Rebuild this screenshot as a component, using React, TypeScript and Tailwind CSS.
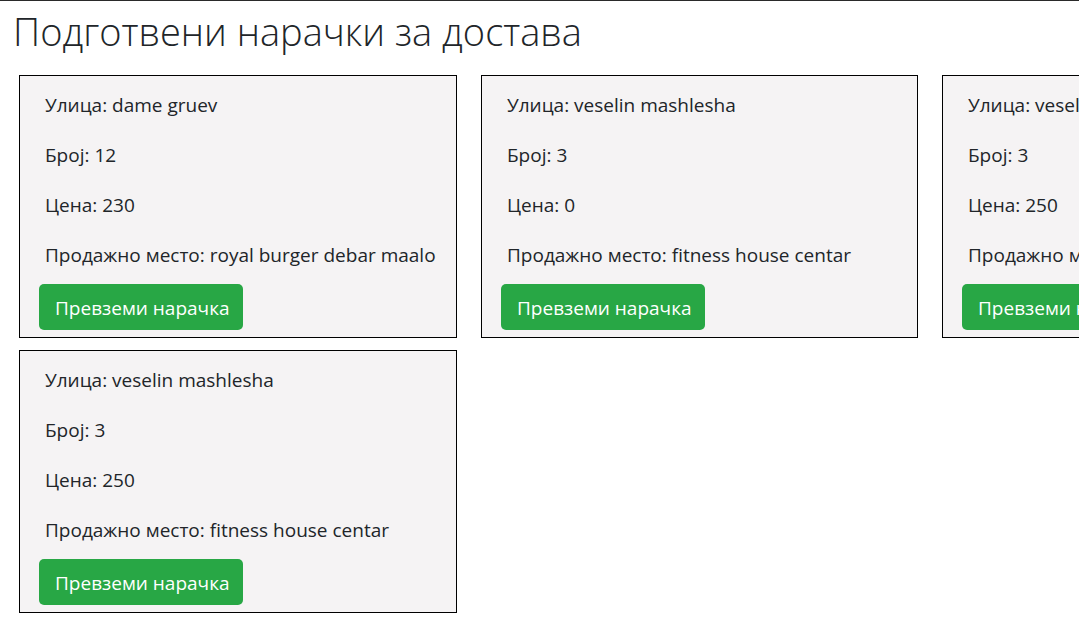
import React from "react";

const orders = [
  { street: "dame gruev", num: "12", price: "230", place: "royal burger debar maalo" },
  { street: "veselin mashlesha", num: "3", price: "0", place: "fitness house centar" },
  { street: "veselin mashlesha", num: "3", price: "250", place: "fitness house centar" },
  { street: "veselin mashlesha", num: "3", price: "250", place: "fitness house centar" },
];

export default function App() {
  return (
    <div
      className="w-[1079px] h-[617px] overflow-hidden bg-white text-[#212529]"
      style={{ fontFamily: '"Open Sans", "Noto Sans", sans-serif' }}
    >
      <div className="h-px bg-[#2a2a2a]" />
      <h1 className="ml-[13px] mt-[8px] text-[38px] font-light leading-[44px] text-[#212529] whitespace-nowrap">
        Подготвени нарачки за достава
      </h1>
      <div className="mt-[22px] ml-[19px] w-[1400px] grid grid-cols-[438px_437px_438px] gap-x-[24px] gap-y-[12px]">
        {orders.map((o, i) => (
          <div key={i} className="border border-black bg-[#f5f3f4] h-[263px] pt-[14px] pl-[19px] pb-[7px] flex flex-col">
            <div className="pl-[6px] text-[19px] leading-[30px] flex flex-col gap-[20px]">
              <p>Улица: {o.street}</p>
              <p>Број: {o.num}</p>
              <p>Цена: {o.price}</p>
              <p className="whitespace-nowrap">Продажно место: {o.place}</p>
            </div>
            <button className="mt-[14px] w-[204px] h-[46px] pt-[2px] rounded-[5px] bg-[#28a745] text-white text-[19px] text-left pl-[16px] whitespace-nowrap">
              Превземи нарачка
            </button>
          </div>
        ))}
      </div>
    </div>
  );
}
